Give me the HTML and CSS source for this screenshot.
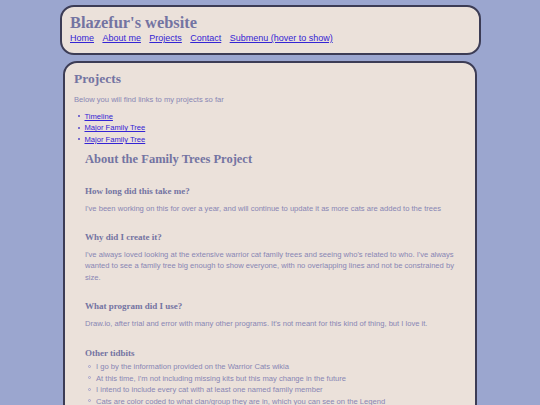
FILE: index.html
```html
<!DOCTYPE html>
<html lang="en">
<head>
<meta charset="utf-8">
<title>Blazefur's website</title>
<link rel="stylesheet" href="styles.css">
</head>
<body>
<div class="page">
  <header class="header">
    <h1 class="site-title">Blazefur's website</h1>
    <nav class="nav">
      <a href="#">Home</a>
      <a href="#">About me</a>
      <a href="#">Projects</a>
      <a href="#">Contact</a>
      <a href="#">Submenu (hover to show)</a>
    </nav>
  </header>
  <main class="main">
    <h2 class="page-title">Projects</h2>
    <p class="intro">Below you will find links to my projects so far</p>
    <ul class="links">
      <li><a href="#">Timeline</a></li>
      <li><a href="#">Major Family Tree</a></li>
      <li><a href="#">Major Family Tree</a></li>
    </ul>
    <section class="about">
      <h3 class="about-title">About the Family Trees Project</h3>
      <h4 class="q first">How long did this take me?</h4>
      <p class="text">I've been working on this for over a year, and will continue to update it as more cats are added to the trees</p>
      <h4 class="q">Why did I create it?</h4>
      <p class="text">I've always loved looking at the extensive warrior cat family trees and seeing who's related to who. I've always wanted to see a family tree big enough to show everyone, with no overlapping lines and not be constrained by size.</p>
      <h4 class="q">What program did I use?</h4>
      <p class="text">Draw.io, after trial and error with many other programs. It's not meant for this kind of thing, but I love it.</p>
      <h4 class="q">Other tidbits</h4>
      <ul class="tidbits">
        <li>I go by the information provided on the Warrior Cats wikia</li>
        <li>At this time, I'm not including missing kits but this may change in the future</li>
        <li>I intend to include every cat with at least one named family member</li>
        <li>Cats are color coded to what clan/group they are in, which you can see on the Legend</li>
      </ul>
    </section>
  </main>
</div>
</body>
</html>
```
FILE: styles.css
```css
html, body {
  margin: 0;
  padding: 0;
}
body {
  background: #9ba6cf;
  font-family: "Liberation Sans", Arial, sans-serif;
  color: #8886b4;
}
.page {
  width: 421px;
  margin: 0 auto;
  padding-top: 4.5px;
}
.header {
  background: #ebe1da;
  border: 2px solid #3c3c55;
  border-radius: 14px;
  padding: 7px 9px 8.6px 8.5px;
}
.site-title {
  margin: 0;
  font-family: "Liberation Serif", Georgia, serif;
  font-weight: bold;
  font-size: 16.4px;
  line-height: 18px;
  color: #7474a2;
}
.nav {
  display: flex;
  gap: 8.4px;
  margin-top: 1.8px;
  font-size: 9px;
  line-height: 11px;
}
a {
  color: #3424d4;
}
.main {
  margin: 6px 3.8px 0;
  background: #ebe1da;
  border: 2px solid #3c3c55;
  border-radius: 14px;
  padding: 7.9px 9px 20px 8.7px;
}
.page-title {
  margin: 0;
  font-family: "Liberation Serif", Georgia, serif;
  font-weight: bold;
  font-size: 13.5px;
  line-height: 16px;
  color: #7474a2;
}
.intro, .text, .links, .tidbits {
  font-size: 7.6px;
  line-height: 11.4px;
}
.intro {
  margin: 7.3px 0 0;
}
.links {
  margin: 5.6px 0 0;
  padding-left: 10.5px;
  list-style: none;
}
.links li::before {
  content: "";
  display: inline-block;
  width: 2px;
  height: 2px;
  border-radius: 50%;
  background: #5546c6;
  margin-left: -6.5px;
  margin-right: 4.5px;
  vertical-align: 1.8px;
}
.about {
  margin: 6.7px 5px 0 11px;
}
.about-title {
  margin: 0;
  font-family: "Liberation Serif", Georgia, serif;
  font-weight: bold;
  font-size: 12.5px;
  line-height: 15px;
  color: #7474a2;
}
.q {
  margin: 18px 0 0;
  font-family: "Liberation Serif", Georgia, serif;
  font-weight: bold;
  font-size: 9px;
  line-height: 11px;
  color: #7474a2;
}
.q.first {
  margin-top: 18.6px;
}
.text {
  margin: 6px 0 0;
}
.tidbits {
  margin: 2.8px 0 0;
  padding-left: 11px;
  list-style: none;
}
.tidbits li::before {
  content: "";
  display: inline-block;
  box-sizing: border-box;
  width: 3px;
  height: 3px;
  border-radius: 50%;
  border: 1px solid #a6a3cb;
  margin-left: -7.5px;
  margin-right: 4.5px;
  vertical-align: 1.4px;
}
```
